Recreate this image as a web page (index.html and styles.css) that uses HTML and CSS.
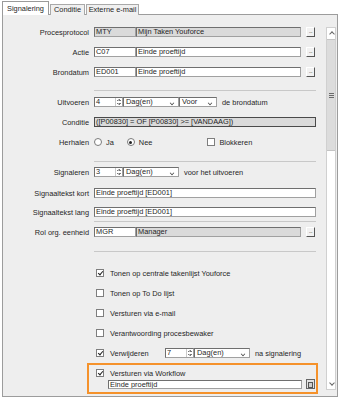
FILE: index.html
```html
<html>
<head>
	<title>Signalering</title>
	<link rel="stylesheet" href="styles.css">
</head>
<body>

<div class="window">
	<div class="tabs">
		<div class="tab active" style="width:43px">Signalering</div>
		<div class="tab" style="width:31px">Conditie</div>
		<div class="tab" style="width:49px">Externe e-mail</div>
	</div>

	<div class="panel">
		<div class="form">

			<div class="row">
				<div class="lbl">Procesprotocol</div>
				<div class="field">
					<div class="inp code dis">MTY</div><div class="inp desc dis">Mijn Taken Youforce</div><div class="btn">...</div>
				</div>
			</div>
			<div class="row">
				<div class="lbl">Actie</div>
				<div class="field">
					<div class="inp code">C07</div><div class="inp desc">Einde proeftijd</div><div class="btn">...</div>
				</div>
			</div>
			<div class="row">
				<div class="lbl">Brondatum</div>
				<div class="field">
					<div class="inp code">ED001</div><div class="inp desc">Einde proeftijd</div><div class="btn">...</div>
				</div>
			</div>

			<div class="sep sep-a"></div>

			<div class="row">
				<div class="lbl">Uitvoeren</div>
				<div class="field">
					<div class="inp spin">4<span class="arrows"></span></div><div class="inp sel wide">Dag(en)<span class="chev"></span></div><div class="inp sel narrow">Voor<span class="chev"></span></div>
					<span class="after">de brondatum</span>
				</div>
			</div>
			<div class="row">
				<div class="lbl">Conditie</div>
				<div class="field">
					<div class="inp full dis dark">([P00830] = OF [P00830] &gt;= [VANDAAG])</div>
				</div>
			</div>
			<div class="row">
				<div class="lbl">Herhalen</div>
				<div class="field">
					<span class="radio"></span><span class="opt">Ja</span>
					<span class="radio on"></span><span class="opt">Nee</span>
					<span class="check blok"></span><span class="opt">Blokkeren</span>
				</div>
			</div>

			<div class="sep sep-b"></div>

			<div class="row">
				<div class="lbl">Signaleren</div>
				<div class="field">
					<div class="inp spin">3<span class="arrows"></span></div><div class="inp sel wide">Dag(en)<span class="chev"></span></div>
					<span class="after">voor het uitvoeren</span>
				</div>
			</div>
			<div class="row gap1">
				<div class="lbl">Signaaltekst kort</div>
				<div class="field">
					<div class="inp full">Einde proeftijd [ED001]</div>
				</div>
			</div>
			<div class="row short">
				<div class="lbl">Signaaltekst lang</div>
				<div class="field">
					<div class="inp full">Einde proeftijd [ED001]</div>
				</div>
			</div>

			<div class="sep"></div>

			<div class="row">
				<div class="lbl">Rol org. eenheid</div>
				<div class="field">
					<div class="inp code">MGR</div><div class="inp desc dis">Manager</div><div class="btn">...</div>
				</div>
			</div>

			<div class="sep sep-c"></div>

			<div class="checks">
				<div class="crow"><span class="check on"></span>Tonen op centrale takenlijst Youforce</div>
				<div class="crow"><span class="check"></span>Tonen op To Do lijst</div>
				<div class="crow"><span class="check"></span>Versturen via e-mail</div>
				<div class="crow"><span class="check"></span>Verantwoording procesbewaker</div>
				<div class="crow">
					<span class="check on"></span><span class="verw">Verwijderen</span>
					<div class="inp spin">7<span class="arrows"></span></div><div class="inp sel dagen">Dag(en)<span class="chev"></span></div>
					<span class="after">na signalering</span>
				</div>
			</div>

			<div class="highlight">
				<div class="crow hrow"><span class="check on"></span>Versturen via Workflow</div>
				<div class="wfrow">
					<div class="inp wf">Einde proeftijd</div><div class="btn pick"><span></span></div>
				</div>
			</div>

		</div>

		<div class="scroll">
			<div class="sbtn up"></div>
			<div class="thumb"><span class="grip"></span></div>
			<div class="track"></div>
			<div class="sbtn down"></div>
		</div>
	</div>
</div>

</body>
</html>
```

FILE: styles.css
```css
body {
	margin: 0;
	background: #ffffff;
	font-family: "Liberation Sans", Arial, sans-serif;
	font-size: 7.4px;
	color: #1f1f1f;
}
.window {
	margin: 2px 0 0 2px;
	width: 336px;
}
.tabs {
	display: flex;
	align-items: flex-end;
	height: 13px;
	margin-bottom: -1px;
	position: relative;
}
.tab {
	height: 10px;
	line-height: 10px;
	padding: 0 1px;
	margin-left: 1px;
	text-align: center;
	background: #f0f0f0;
	border: 1px solid #a9a9a9;
	border-bottom: none;
	white-space: nowrap;
}
.tab.active {
	height: 13px;
	line-height: 13px;
	margin-left: 0;
	background: #ffffff;
	border-color: #9a9a9a;
}
.panel {
	display: flex;
	height: 381px;
	background: #eeeeee;
	border: 1px solid #9c9c9c;
}
.form {
	flex: 1;
	padding-top: 7px;
}
.row {
	display: grid;
	grid-template-columns: 86px 1fr;
	column-gap: 5px;
	align-items: center;
	height: 20px;
}
.row.gap1 {
	margin-top: 1px;
}
.row.short {
	height: 18px;
}
.lbl {
	text-align: right;
	white-space: nowrap;
}
.field {
	display: flex;
	align-items: center;
	white-space: nowrap;
}
.inp {
	box-sizing: border-box;
	height: 10px;
	line-height: 8px;
	padding-left: 1px;
	background: #ffffff;
	border: 1px solid #6f6f6f;
	border-right-color: #a0a0a0;
	border-bottom-color: #a0a0a0;
	overflow: hidden;
	white-space: nowrap;
	position: relative;
}
.inp.dis {
	background: #dadada;
}
.inp.dark {
	border-color: #4a4a4a;
}
.code {
	width: 42px;
}
.desc {
	width: 165px;
}
.full {
	width: 222px;
}
.btn {
	box-sizing: border-box;
	width: 9px;
	height: 10px;
	margin-left: 5px;
	background: #f2f2f2;
	border: 1px solid #ffffff;
	border-right-color: #555555;
	border-bottom-color: #555555;
	font-size: 6px;
	line-height: 6px;
	text-align: center;
	letter-spacing: -0.5px;
	color: #333333;
}
.spin {
	width: 29px;
}
.arrows {
	position: absolute;
	right: 1px;
	top: 0;
	width: 5px;
	height: 8px;
	background:
		linear-gradient(to bottom right, transparent 49%, #777 50%) 0 1px / 2.5px 2px no-repeat,
		linear-gradient(to bottom left, transparent 49%, #777 50%) 2.5px 1px / 2.5px 2px no-repeat,
		linear-gradient(to top right, transparent 49%, #777 50%) 0 5px / 2.5px 2px no-repeat,
		linear-gradient(to top left, transparent 49%, #777 50%) 2.5px 5px / 2.5px 2px no-repeat;
	border-left: 1px solid #c9c9c9;
}
.sel {
	padding-left: 2px;
}
.wide {
	width: 56px;
}
.narrow {
	width: 38px;
}
.dagen {
	width: 56px;
}
.chev {
	position: absolute;
	right: 4px;
	top: 3px;
	width: 3px;
	height: 3px;
	border-right: 1px solid #444;
	border-bottom: 1px solid #444;
	transform: rotate(45deg) scale(0.8);
}
.after {
	margin-left: 5px;
}
.radio {
	box-sizing: border-box;
	width: 8px;
	height: 8px;
	margin-left: 0;
	border-radius: 50%;
	border: 1px solid #7a7a7a;
	background: #ffffff;
	position: relative;
}
.radio.on {
	margin-left: 13px;
}
.radio.on::after {
	content: "";
	position: absolute;
	left: 1.5px;
	top: 1.5px;
	width: 3px;
	height: 3px;
	border-radius: 50%;
	background: #222;
}
.opt {
	margin-left: 4px;
}
.check {
	box-sizing: border-box;
	display: inline-block;
	width: 8px;
	height: 8px;
	border: 1px solid #7e7e7e;
	background: #ffffff;
	position: relative;
	flex-shrink: 0;
}
.check.on::after {
	content: "";
	position: absolute;
	left: 2px;
	top: 0;
	width: 2px;
	height: 4px;
	border-right: 1px solid #222;
	border-bottom: 1px solid #222;
	transform: rotate(40deg);
}
.check.blok {
	margin-left: 55px;
}
.sep {
	margin-left: 91px;
	width: 222px;
	border-top: 1px solid #c8c8c8;
}
.sep-a {
	margin-top: 8px;
	margin-bottom: 1px;
}
.sep-b {
	margin-top: 9px;
}
.sep-c {
	margin-top: 9px;
	margin-bottom: 11px;
}
.checks {
	margin-left: 93px;
}
.crow {
	display: flex;
	align-items: center;
	height: 20px;
	white-space: nowrap;
}
.crow .check {
	margin-right: 6px;
}
.verw {
	width: 55px;
}
.highlight {
	box-sizing: border-box;
	width: 231px;
	margin-left: 84px;
	padding: 2px 1px 3px 7px;
	border: 2px solid #f5922b;
}
.hrow {
	height: 12px;
}
.wfrow {
	display: flex;
	align-items: center;
	padding-left: 12px;
}
.wf {
	width: 194px;
	height: 9px;
	line-height: 7px;
}
.pick {
	margin-left: 4px;
	background: #e2e2e2;
	border: 1px solid #666666;
	padding: 1px;
}
.pick span {
	display: block;
	width: 3px;
	height: 4px;
	margin: 1px auto 0;
	border: 1px solid #555555;
	background: #cfcfcf;
}
.scroll {
	display: flex;
	flex-direction: column;
	width: 10px;
	margin: 12px 1px 6px 0;
	background: #ffffff;
	border: 1px solid #d0d0d0;
	box-sizing: border-box;
}
.sbtn {
	height: 10px;
	background: #ffffff;
	position: relative;
}
.sbtn::after {
	content: "";
	position: absolute;
	left: 2.5px;
	width: 3px;
	height: 3px;
	border-left: 1px solid #666;
	border-top: 1px solid #666;
}
.sbtn.up::after {
	top: 4px;
	transform: rotate(45deg);
}
.sbtn.down::after {
	top: 2px;
	transform: rotate(225deg);
}
.thumb {
	height: 110px;
	margin: 1px 0;
	background: #dcdcdc;
	border-top: 1px solid #c4c4c4;
	border-bottom: 1px solid #c4c4c4;
	display: flex;
	align-items: center;
	justify-content: center;
}
.grip {
	width: 5px;
	height: 5px;
	background: repeating-linear-gradient(to bottom, #6a6a6a 0 1px, transparent 1px 2px);
}
.track {
	flex: 1;
}
```
